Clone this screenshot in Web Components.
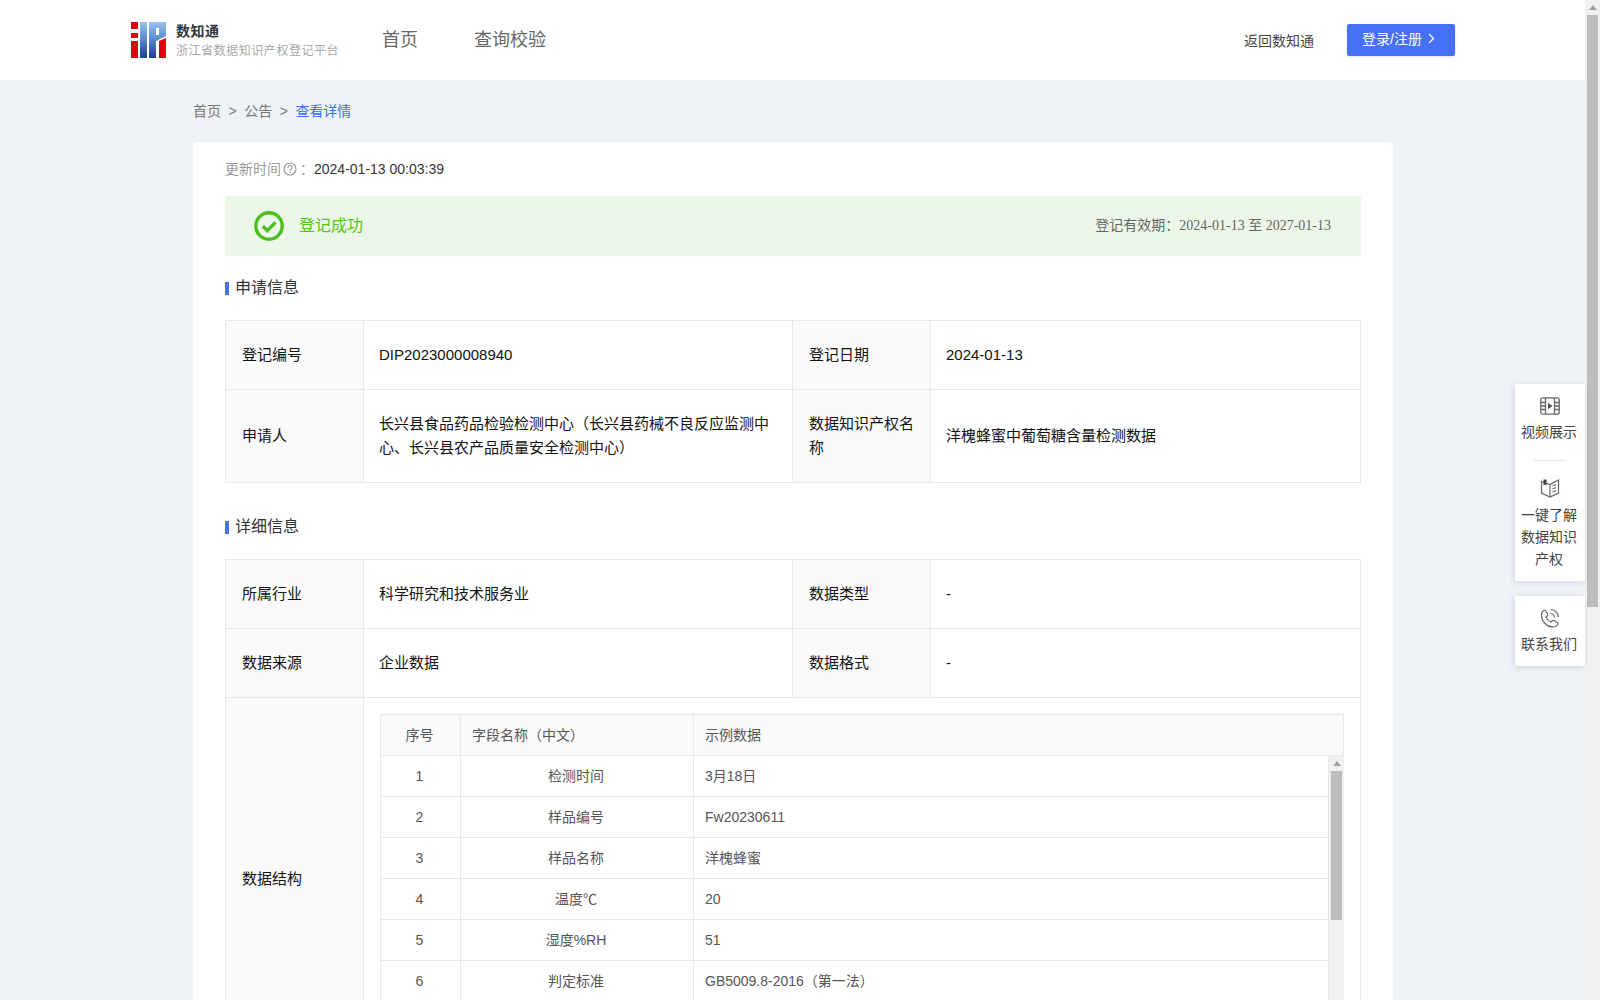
<!DOCTYPE html>
<html lang="zh-CN">
<head>
<meta charset="utf-8">
<title>数知通</title>
<style>
html,body{margin:0;padding:0;height:1000px;overflow:hidden;background:#eff3f6}
body{font-family:"Liberation Sans","Noto Sans CJK SC",sans-serif;font-size:14px;color:#333}
</style>
</head>
<body>
<dip-app>
  <dip-header></dip-header>
  <dip-breadcrumb>
    <span>首页</span><span>公告</span><span>查看详情</span>
  </dip-breadcrumb>
  <dip-card>
    <dip-updated time="2024-01-13 00:03:39"></dip-updated>
    <dip-status from="2024-01-13" to="2027-01-13">登记成功</dip-status>
    <dip-section>申请信息</dip-section>
    <dip-kv-table>
      <dip-cell label>登记编号</dip-cell><dip-cell>DIP2023000008940</dip-cell>
      <dip-cell label>登记日期</dip-cell><dip-cell last>2024-01-13</dip-cell>
      <dip-cell label>申请人</dip-cell><dip-cell>长兴县食品药品检验检测中心（长兴县药械不良反应监测中心、长兴县农产品质量安全检测中心）</dip-cell>
      <dip-cell label>数据知识产权名称</dip-cell><dip-cell last>洋槐蜂蜜中葡萄糖含量检测数据</dip-cell>
    </dip-kv-table>
    <dip-section>详细信息</dip-section>
    <dip-kv-table>
      <dip-cell label>所属行业</dip-cell><dip-cell>科学研究和技术服务业</dip-cell>
      <dip-cell label>数据类型</dip-cell><dip-cell last>-</dip-cell>
      <dip-cell label>数据来源</dip-cell><dip-cell>企业数据</dip-cell>
      <dip-cell label>数据格式</dip-cell><dip-cell last>-</dip-cell>
      <dip-cell label>数据结构</dip-cell>
      <dip-cell wide>
        <dip-data-table>
          <dip-data-row head><span>序号</span><span>字段名称（中文）</span><span>示例数据</span></dip-data-row>
          <dip-data-row slot="body"><span>1</span><span>检测时间</span><span>3月18日</span></dip-data-row>
          <dip-data-row slot="body"><span>2</span><span>样品编号</span><span>Fw20230611</span></dip-data-row>
          <dip-data-row slot="body"><span>3</span><span>样品名称</span><span>洋槐蜂蜜</span></dip-data-row>
          <dip-data-row slot="body"><span>4</span><span>温度℃</span><span>20</span></dip-data-row>
          <dip-data-row slot="body"><span>5</span><span>湿度%RH</span><span>51</span></dip-data-row>
          <dip-data-row slot="body"><span>6</span><span>判定标准</span><span>GB5009.8-2016（第一法）</span></dip-data-row>
        </dip-data-table>
      </dip-cell>
    </dip-kv-table>
  </dip-card>
  <dip-floatbar slot="overlay"></dip-floatbar>
  <dip-scrollbar slot="scroll" thumb-top="15" thumb-height="592"></dip-scrollbar>
</dip-app>
<script>
function define(name, css, html, extra){
  customElements.define(name, class extends HTMLElement{
    constructor(){
      super();
      const r=this.attachShadow({mode:'open'});
      r.innerHTML='<style>'+css+'</style>'+(typeof html==='function'?html(this):html);
    }
    connectedCallback(){ if(extra) extra(this); }
  });
}

define('dip-app',`
  :host{display:flex;width:1600px;height:1000px;overflow:hidden;position:relative}
  .main{flex:1;min-width:0;height:1000px;overflow:hidden}
`,`<div class="main"><slot></slot></div><slot name="scroll"></slot><slot name="overlay"></slot>`);

define('dip-scrollbar',`
  :host{display:flex;flex-direction:column;align-items:center;width:15px;flex:none;background:#f1f1f1;height:var(--h,1000px);overflow:hidden}
  .arrow{flex:none;width:0;height:0;margin-top:5px;border:4px solid transparent;border-top:0;border-bottom:5px solid #a3a3a3}
  .thumb{flex:none;width:11px;background:#bdbdbd}
`,el=>{
  const top=+el.getAttribute('thumb-top'),h=+el.getAttribute('thumb-height');
  return `<div class="arrow"></div><div class="thumb" style="margin-top:${top-10}px;height:${h}px"></div>`;
});

define('dip-header',`
  :host{display:flex;align-items:center;height:80px;background:#fff;padding:0 130px 0 131px;box-sizing:border-box}
  .logo{display:block;flex:none;width:35px;height:36px}
  .brand{margin-left:10px;width:163px;flex:none;padding-top:2px}
  .t{font-size:14px;font-weight:700;letter-spacing:.5px;line-height:18px;color:#333}
  .s{font-size:12px;letter-spacing:.55px;line-height:18px;color:#a8a8a8;margin-top:2px;white-space:nowrap}
  nav{display:flex;gap:56px;margin-left:43px;padding-bottom:4px;font-size:18px;color:#666}
  .right{margin-left:auto;display:flex;align-items:center;gap:33px}
  .back{color:#444;font-size:14px;padding-bottom:1px}
  .btn{display:flex;align-items:center;gap:6px;width:108px;height:32px;box-sizing:border-box;padding:0 0 4px 15px;border-radius:2px;background:#4670f5;color:#fff;font-size:14px;box-shadow:0 1px 3px rgba(70,112,245,.2)}
`,`
  <svg class="logo" viewBox="0 0 35 36">
    <defs>
      <linearGradient id="lg" x1="0" y1="0" x2="0" y2="1">
        <stop offset="0" stop-color="#9cc3ee"/><stop offset=".45" stop-color="#5d8ccf"/><stop offset="1" stop-color="#1d3c8e"/>
      </linearGradient>
    </defs>
    <path fill="#d9050f" d="M0 0h7v7H0zM0 11h7v5H0zM0 19h7v17H0z"/>
    <rect fill="url(#lg)" x="9" y="0" width="7" height="36"/>
    <path fill="url(#lg)" d="M18 0h17v14l-10 5v17h-7zM25 6v7h3V6z"/>
    <path fill="#d9050f" d="M28 19l7-3v20h-7z"/>
  </svg>
  <div class="brand"><div class="t">数知通</div><div class="s">浙江省数据知识产权登记平台</div></div>
  <nav><span>首页</span><span>查询校验</span></nav>
  <div class="right"><span class="back">返回数知通</span>
    <div class="btn"><span>登录/注册</span><svg width="7" height="11" viewBox="0 0 7 11"><path d="M1 1l4.500 4.500L1 10" fill="none" stroke="#fff" stroke-width="1.300"/></svg></div>
  </div>
`);

define('dip-breadcrumb',`
  :host{display:flex;align-items:center;height:62px;padding-left:193px;box-sizing:border-box;font-size:14px;color:#777;padding-bottom:2px}
  ::slotted(span:nth-child(n+2))::before{content:">";margin:0 7.5px;color:#777}
  ::slotted(span:last-child){color:#3570f5}
`,`<slot></slot>`);

define('dip-card',`
  :host{display:block;width:1200px;box-sizing:border-box;margin-left:193px;background:#fff;border-radius:4px;padding:16px 32px 32px}
`,`<slot></slot>`);

define('dip-updated',`
  :host{display:flex;align-items:center;height:22px;font-size:14px}
  .k{color:#999;margin-bottom:2px}
  svg{margin:0 3px 0 2px;flex:none}
  .c{color:#999;width:16px;flex:none;margin-bottom:2px}
  .v{color:#333;margin-left:-2px}
`,el=>`<span class="k">更新时间</span><svg width="14" height="14" viewBox="0 0 14 14"><circle cx="7" cy="7" r="6" fill="none" stroke="#999" stroke-width="1.200"/><path d="M5 5.500A2 2 0 1 1 8 7.200c-.7.4-1 .8-1 1.500" fill="none" stroke="#999" stroke-width="1.200"/><circle cx="7" cy="10.400" r=".8" fill="#999"/></svg><span class="c">：</span><span class="v">${el.getAttribute('time')}</span>`);

define('dip-status',`
  :host{display:flex;align-items:center;height:60px;margin-top:16px;padding:0 30px 0 29px;background:#ecf7e8}
  svg{flex:none}
  .t{margin-left:15px;padding-bottom:4px;font-size:16px;color:#52c41a}
  .r{margin-left:auto;padding-bottom:4px;font-size:14px;color:#666}
  .d{font-family:"Liberation Serif","Noto Sans CJK SC",serif}
`,el=>`<svg width="30" height="30" viewBox="0 0 30 30"><circle cx="15" cy="15" r="13.200" fill="none" stroke="#4cbf1d" stroke-width="3.400"/><path d="M8.800 15.200l4.600 4.400 8-8.200" fill="none" stroke="#4cbf1d" stroke-width="3.400"/></svg><span class="t"><slot></slot></span><span class="r">登记有效期：<span class="d">${el.getAttribute('from')} 至 ${el.getAttribute('to')}</span></span>`);

define('dip-section',`
  :host{display:flex;align-items:center;height:22px;margin:20px 0 22px;font-size:16px;color:#333}
  i{display:block;width:4px;height:13px;margin:2px 6px 0 0;background:#4670f5;flex:none}
  span{padding-bottom:2px}
`,`<i></i><span><slot></slot></span>`,el=>{ if(el.previousElementSibling && el.previousElementSibling.localName==='dip-kv-table') el.style.marginTop='32px'; });

define('dip-kv-table',`
  :host{display:block;box-sizing:border-box;width:1136px;border:1px solid #e8e8e8;border-bottom:0}
  .g{display:grid;grid-template-columns:138px 429px 138px 1fr}
`,`<div class="g"><slot></slot></div>`);

define('dip-cell',`
  :host{display:flex;align-items:center;box-sizing:border-box;padding:22px 16px 22px 15px;border-right:1px solid #e8e8e8;border-bottom:1px solid #e8e8e8;font-size:15px;line-height:24px;color:#111;min-width:0}
  :host([label]){background:#fafafa;padding-left:16px}
  :host([last]){border-right:0}
  :host([wide]){grid-column:span 3;border-right:0;padding:16px}
`,`<slot></slot>`);

define('dip-data-table',`
  :host{display:block;width:100%;height:329px;box-sizing:border-box;border:1px solid #e8e8e8;border-bottom:0;border-right:0;overflow:hidden}
  .b{display:flex;height:288px;overflow:hidden}
  .rows{flex:1;min-width:0;overflow:hidden;border-right:1px solid #e8e8e8}
  .bar{--h:288px}
`,`<slot></slot><div class="b"><div class="rows"><slot name="body"></slot></div><dip-scrollbar class="bar" thumb-top="15" thumb-height="149"></dip-scrollbar></div>`);

define('dip-data-row',`
  :host{display:grid;grid-template-columns:80px 233px 1fr;height:41px;box-sizing:border-box;border-bottom:1px solid #e8e8e8;font-size:14px;color:#555;line-height:40px}
  :host([head]){background:#fafafa;border-right:1px solid #e8e8e8}
  ::slotted(span){box-sizing:border-box;border-right:1px solid #e8e8e8;text-align:center;white-space:nowrap;overflow:hidden;padding-right:2px}
  ::slotted(span:last-child){border-right:0;text-align:left;padding-left:11px}
  :host([head]) ::slotted(span:nth-child(2)){text-align:left;padding-left:11px}
`,`<slot></slot>`);

define('dip-floatbar',`
  :host{position:absolute;top:384px;right:15px;width:70px;display:flex;flex-direction:column;gap:15px;font-size:14px;color:#444;line-height:22px;text-align:center}
  .p{background:#fff;box-shadow:-1px 1px 6px rgba(60,80,110,.18)}
  .i{display:flex;flex-direction:column;align-items:center}
  .i span{margin-right:2px}
  svg{display:block;flex:none}
  hr{width:32px;height:1px;border:0;background:#e4e4e4;margin:0 auto}
`,`
  <div class="p" style="height:197px">
    <div class="i" style="padding-top:13px;height:64px;box-sizing:border-box">
      <svg width="20" height="18" viewBox="0 0 20 18" fill="none" stroke="#666" stroke-width="1.300"><rect x=".8" y=".8" width="18.400" height="16.400" rx="2"/><path d="M5.500 1v16M14.500 1v16M1 5.500h4.500M1 9h4.500M1 12.500h4.500M14.500 5.500H19M14.500 9H19M14.500 12.500H19"/><path d="M8 5.800v6.400L12.600 9z" fill="#555" stroke="none"/></svg>
      <span style="margin-top:6px">视频展示</span>
    </div>
    <hr style="margin-top:12px">
    <div class="i" style="padding-top:17px">
      <svg width="20" height="20" viewBox="0 0 20 20" fill="none" stroke="#666" stroke-width="1.200"><path d="M1.500 3.500L10 6.500 18.500 2v13L10 19l-8.500-4z"/><path d="M10 6.500V19M12.500 8l3.500-1.500M12.500 11l3.500-1.500M12.500 14l3.500-1.500"/><path d="M3.500 1.500h3v6l-1.500-1-1.500 1z" fill="#444" stroke="none"/></svg>
      <span style="margin-top:6px;width:60px">一键了解数据知识产权</span>
    </div>
  </div>
  <div class="p" style="height:70px">
    <div class="i" style="padding-top:12px">
      <svg width="20" height="20" viewBox="0 0 20 20" fill="none" stroke="#666" stroke-width="1.200"><path d="M5 2l2.600 4q.5 1.200-.7 2.200L6 9q1.500 3.500 5 5l.8-.8q1-1.200 2.200-.7l4 2.500q-.5 3.500-4 4-6 0-9.500-4T1.500 5.500Q2 2.500 5 2z"/><path d="M10.500 5.500a4.500 4.500 0 0 1 4 4M11 1.500a8 8 0 0 1 7.500 7.500"/></svg>
      <span style="margin-top:5px">联系我们</span>
    </div>
  </div>
`);
</script>
</body>
</html>
